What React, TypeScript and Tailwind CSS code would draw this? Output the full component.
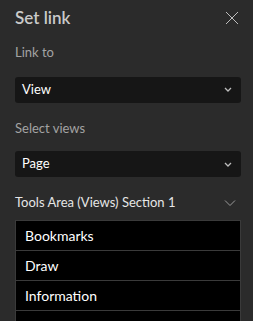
import React from 'react';

const font = { fontFamily: 'Lato, "Noto Sans", sans-serif' };

function Chevron({ size = 'sm' }: { size?: 'sm' | 'lg' }) {
  if (size === 'lg') {
    return (
      <svg width="12" height="8" viewBox="0 0 12 8" className="text-[#9a9a9a]">
        <path d="M1 1.5 L6 6.5 L11 1.5" fill="none" stroke="currentColor" strokeWidth="1" />
      </svg>
    );
  }
  return (
    <svg width="8" height="5" viewBox="0 0 8 5" className="text-[#bdbdbd]">
      <path d="M1 1 L4 4 L7 1" fill="none" stroke="currentColor" strokeWidth="1.3" />
    </svg>
  );
}

function Select({ value }: { value: string }) {
  return (
    <div className="flex h-[26px] items-center justify-between rounded-[3px] bg-[#161616] pl-[7px] pr-[9px]">
      <span className="text-[13px] text-white">{value}</span>
      <Chevron />
    </div>
  );
}

export default function App() {
  const views = ['Bookmarks', 'Draw', 'Information', 'Layers'];

  return (
    <div className="h-[321px] w-[253px] overflow-hidden bg-[#2b2b2b] pl-[15px] pr-[12px]" style={font}>
      {/* header */}
      <div className="flex h-[34px] items-center justify-between pt-[2px]">
        <h2 className="text-[17px] font-semibold text-[#cacaca]">Set link</h2>
        <svg width="14" height="14" viewBox="0 0 14 14" className="mr-[2px] text-[#bdbdbd]">
          <path d="M1 1 L13 13 M13 1 L1 13" stroke="currentColor" strokeWidth="1" />
        </svg>
      </div>

      <div className="mt-[9px] text-[13px] text-[#a3a3a3]">Link to</div>
      <div className="mt-[14px]">
        <Select value="View" />
      </div>

      <div className="mt-[16px] text-[13px] text-[#a3a3a3]">Select views</div>
      <div className="mt-[13px]">
        <Select value="Page" />
      </div>

      <div className="mt-[16px] flex items-center justify-between pr-[5px]">
        <span className="text-[13px] text-[#e6e6e6]">Tools Area (Views) Section 1</span>
        <Chevron size="lg" />
      </div>

      <div className="mt-[7px] flex flex-col">
        {views.map((v) => (
          <div
            key={v}
            className="-mt-px flex h-[31px] items-center border border-[#3a3a3a] bg-black pl-[9px] text-[14px] text-white first:mt-0"
          >
            {v}
          </div>
        ))}
      </div>
    </div>
  );
}
